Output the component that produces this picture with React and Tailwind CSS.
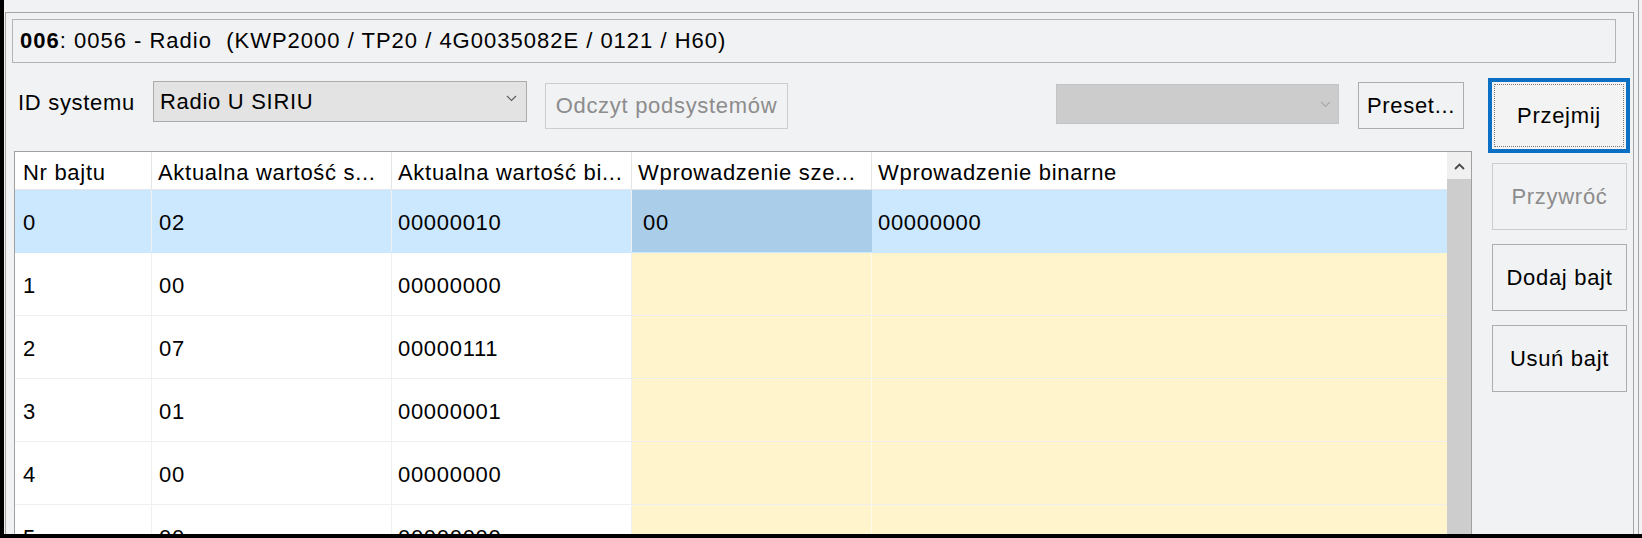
import React from "react";

const rows = [
  ["0", "02", "00000010"],
  ["1", "00", "00000000"],
  ["2", "07", "00000111"],
  ["3", "01", "00000001"],
  ["4", "00", "00000000"],
  ["5", "00", "00000000"],
];

function Chevron({ color, className }) {
  return (
    <svg width="11" height="7" viewBox="0 0 11 7" className={className}>
      <polyline points="1,1 5.5,5.5 10,1" fill="none" stroke={color} strokeWidth="1.1" />
    </svg>
  );
}

function Btn({ children, className = "", disabled = false }) {
  return (
    <div
      className={
        "flex items-center justify-center whitespace-nowrap border " +
        (disabled ? "border-[#cdcdcd] text-[#8c8c8c] " : "border-[#adadad] text-black ") +
        className
      }
    >
      {children}
    </div>
  );
}

export default function App() {
  return (
    <div className="w-[1642px] h-[538px] bg-black overflow-hidden font-['Liberation_Sans',Arial,sans-serif] text-[22px] tracking-[0.7px] text-black leading-none">
      <div className="ml-[4px] h-[534px] w-[1638px] bg-[#f1f2f4] flex">
        <div className="w-[1630px] h-full flex flex-col">
          <div className="h-[12px] shrink-0" />
          <div className="flex-1 min-h-0 ml-[1px] border-t border-l border-r border-[#a5a5a5] pl-[6px] pt-[6px] flex flex-col overflow-hidden">
            {/* title box */}
            <div className="w-[1604px] h-[44px] shrink-0 border border-[#b4b4b4] flex items-center pl-[7px] whitespace-pre tracking-[1px]">
              <span className="font-bold">006</span>
              <span>: 0056 - Radio  (KWP2000 / TP20 / 4G0035082E / 0121 / H60)</span>
            </div>

            <div className="mt-[15px] flex items-start gap-[16px]">
              {/* left column */}
              <div className="w-[1460px] flex flex-col">
                {/* toolbar */}
                <div className="h-[73px] flex items-start pr-[8px]">
                  <div className="w-[141px] pl-[6px] mt-[13px] leading-[24px] whitespace-nowrap">
                    ID systemu
                  </div>
                  <div className="w-[374px] h-[41px] mt-[3px] bg-[#e3e3e3] border border-[#acacac] flex items-center pl-[6px] pr-[9px]">
                    <span className="flex-1 whitespace-nowrap">Radio U SIRIU</span>
                    <Chevron color="#5a5a5a" className="mb-[6px]" />
                  </div>
                  <Btn disabled className="ml-[18px] w-[243px] h-[46px] mt-[5px]">
                    Odczyt podsystemów
                  </Btn>
                  <div className="flex-1" />
                  <div className="w-[283px] h-[40px] mt-[6px] bg-[#cccccc] border border-[#c4c4c4] flex items-center justify-end pr-[7px]">
                    <Chevron color="#a9a9a9" />
                  </div>
                  <Btn className="ml-[19px] w-[106px] h-[47px] mt-[4px]">Preset...</Btn>
                </div>

                {/* table */}
                <div className="ml-[2px] w-[1458px] h-[460px] border border-[#a0a0a0] bg-white flex">
                  <div className="w-[1432px] flex flex-col">
                    {/* header */}
                    <div className="h-[38px] shrink-0 flex bg-white border-b border-[#e3e7eb]">
                      {[
                        ["w-[137px] pl-[8px]", "Nr bajtu"],
                        ["w-[240px] pl-[6px]", "Aktualna wartość s..."],
                        ["w-[240px] pl-[6px]", "Aktualna wartość bi..."],
                        ["w-[240px] pl-[6px]", "Wprowadzenie sze..."],
                        ["w-[575px] pl-[6px]", "Wprowadzenie binarne"],
                      ].map(([cls, t], i) => (
                        <div
                          key={i}
                          className={
                            cls +
                            " h-full flex items-center pt-[4px] whitespace-nowrap overflow-hidden " +
                            (i < 4 ? "border-r border-[#e5e5e5]" : "")
                          }
                        >
                          {t}
                        </div>
                      ))}
                    </div>
                    {/* rows */}
                    {rows.map((r, idx) => {
                      const sel = idx === 0;
                      const base = sel ? "bg-[#cce8ff]" : "bg-white";
                      const yellow = sel ? "" : "bg-[#fff4cc]";
                      return (
                        <div
                          key={idx}
                          className={
                            "h-[63px] shrink-0 flex border-b " +
                            (sel ? "border-[#cce8ff]" : "border-[#efefef]")
                          }
                        >
                          <div className={"w-[137px] pl-[8px] flex items-center pt-[3px] border-r border-[#f0f0f0] " + base}>
                            {r[0]}
                          </div>
                          <div className={"w-[240px] pl-[7px] flex items-center pt-[3px] border-r border-[#f0f0f0] " + base}>
                            {r[1]}
                          </div>
                          <div className={"w-[240px] pl-[6px] flex items-center pt-[3px] border-r border-[#f0f0f0] " + base}>
                            {r[2]}
                          </div>
                          <div
                            className={
                              "w-[240px] pl-[11px] flex items-center pt-[3px] border-r " +
                              (sel ? "bg-[#aacdea] border-[#aacdea]" : "bg-[#fff4cc] border-[#fffaea]")
                            }
                          >
                            {sel ? "00" : ""}
                          </div>
                          <div className={"w-[575px] pl-[6px] flex items-center pt-[3px] " + (sel ? base : yellow)}>
                            {sel ? "00000000" : ""}
                          </div>
                        </div>
                      );
                    })}
                  </div>
                  {/* scrollbar */}
                  <div className="w-[24px] flex flex-col bg-[#f0f0f0]">
                    <div className="h-[27px] shrink-0 flex items-center justify-center pt-[2px]">
                      <svg width="11" height="7" viewBox="0 0 11 7">
                        <polyline points="1,6 5.5,1.5 10,6" fill="none" stroke="#4a4a4a" strokeWidth="1.8" />
                      </svg>
                    </div>
                    <div className="flex-1 bg-[#cdcdcd]" />
                  </div>
                </div>
              </div>

              {/* right column */}
              <div className="w-[142px] flex flex-col">
                <div className="h-[75px] border-[4px] border-[#0b6fc4] p-[2px] bg-[#f3f3f3]">
                  <div className="w-full h-full border border-dotted border-[#7a7a7a] flex items-center justify-center">
                    Przejmij
                  </div>
                </div>
                <Btn disabled className="mt-[10px] ml-[4px] w-[135px] h-[67px]">
                  Przywróć
                </Btn>
                <Btn className="mt-[14px] ml-[4px] w-[135px] h-[67px]">Dodaj bajt</Btn>
                <Btn className="mt-[14px] ml-[4px] w-[135px] h-[67px]">Usuń bajt</Btn>
              </div>
            </div>
          </div>
        </div>
        <div className="w-[4px]" />
        <div className="w-[1px] h-full bg-[#a5a5a5]" />
      </div>
    </div>
  );
}
